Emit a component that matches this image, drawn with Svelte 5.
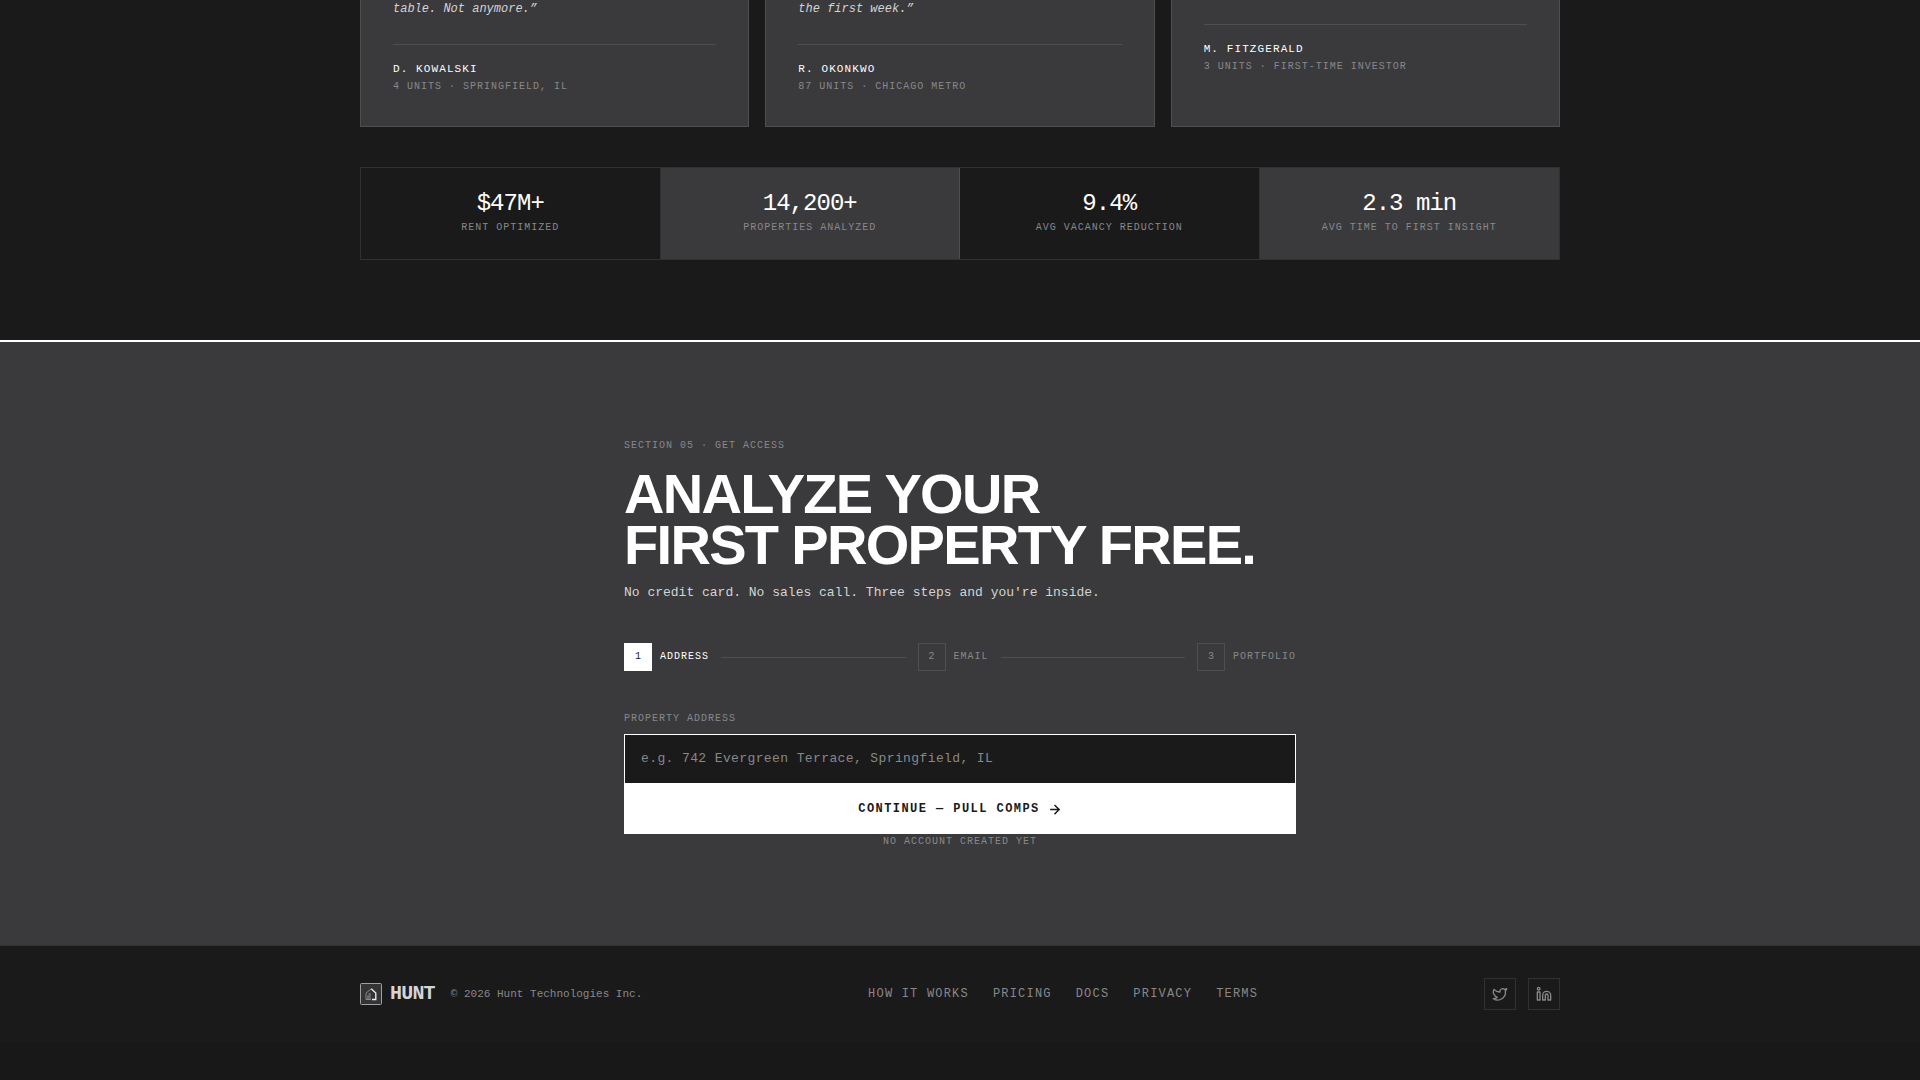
<script>
  const testimonials = [
    { quote: 'table. Not anymore.”', name: 'D. KOWALSKI', detail: '4 UNITS · SPRINGFIELD, IL' },
    { quote: 'the first week.”', name: 'R. OKONKWO', detail: '87 UNITS · CHICAGO METRO' },
    { quote: '', name: 'M. FITZGERALD', detail: '3 UNITS · FIRST-TIME INVESTOR' },
  ];

  const stats = [
    { value: '$47M+', label: 'RENT OPTIMIZED' },
    { value: '14,200+', label: 'PROPERTIES ANALYZED' },
    { value: '9.4%', label: 'AVG VACANCY REDUCTION' },
    { value: '2.3 min', label: 'AVG TIME TO FIRST INSIGHT' },
  ];

  const steps = ['ADDRESS', 'EMAIL', 'PORTFOLIO'];
  const links = ['HOW IT WORKS', 'PRICING', 'DOCS', 'PRIVACY', 'TERMS'];
  let address = $state('');
</script>

<main>
  <section class="proof">
    <div class="cards">
      {#each testimonials as t}
        <figure class="card">
          {#if t.quote}<blockquote>{t.quote}</blockquote>{/if}
          <figcaption>
            <span class="name">{t.name}</span>
            <span class="label">{t.detail}</span>
          </figcaption>
        </figure>
      {/each}
    </div>
    <div class="stats">
      {#each stats as s}
        <div class="stat">
          <strong>{s.value}</strong>
          <span class="label">{s.label}</span>
        </div>
      {/each}
    </div>
  </section>

  <section class="access">
    <div class="inner">
      <p class="label">SECTION 05 · GET ACCESS</p>
      <h2>ANALYZE YOUR<br />FIRST PROPERTY FREE.</h2>
      <p class="lead">No credit card. No sales call. Three steps and you're inside.</p>

      <ol class="steps">
        {#each steps as step, i}
          {#if i > 0}<li class="line" aria-hidden="true"></li>{/if}
          <li class="step" class:active={i === 0}>
            <span class="num">{i + 1}</span>
            <span class="label">{step}</span>
          </li>
        {/each}
      </ol>

      <form onsubmit={(e) => e.preventDefault()}>
        <label class="label" for="address">PROPERTY ADDRESS</label>
        <input id="address" type="text" bind:value={address} placeholder="e.g. 742 Evergreen Terrace, Springfield, IL" />
        <button type="submit">
          CONTINUE — PULL COMPS
          <svg width="14" height="14" viewBox="0 0 24 24" fill="none" stroke="currentColor" stroke-width="2.5" stroke-linecap="square" aria-hidden="true">
            <path d="M5 13h14M12 6l7 7-7 7" />
          </svg>
        </button>
        <p class="label note">NO ACCOUNT CREATED YET</p>
      </form>
    </div>
  </section>

  <footer>
    <div class="bar">
      <div class="brand">
        <svg width="22" height="22" viewBox="0 0 22 22" fill="none" aria-hidden="true">
          <rect x="0.5" y="0.5" width="21" height="21" rx="1" fill="#343436" stroke="#a0a0a0" />
          <path d="M11.2 5.8L6 10.2V16.5H11" stroke="#8a8a8a" />
          <path d="M11.2 5.8L15.8 10V16.5H12" stroke="#f0f0f0" stroke-width="1.3" />
          <path d="M7 16V12.5H8.5V10H10.8V16Z" fill="#6a6a6c" />
        </svg>
        <span class="word">HUNT</span>
        <small>© 2026 Hunt Technologies Inc.</small>
      </div>
      <nav>
        {#each links as link}<a href="#top">{link}</a>{/each}
      </nav>
      <div class="social">
        <a href="#twitter" aria-label="Twitter">
          <svg width="16" height="16" viewBox="0 0 24 24" fill="none" stroke="currentColor" stroke-width="2" stroke-linecap="round" stroke-linejoin="round">
            <path d="M22 4s-.7 2.1-2 3.4c1.6 10-9.4 17.3-18 11.6 2.2.1 4.4-.6 6-2C3 15.5.5 9.6 3 5c2.2 2.6 5.6 4.1 9 4-.9-4.2 4-6.6 7-3.8 1.1 0 3-1.2 3-1.2z" />
          </svg>
        </a>
        <a href="#linkedin" aria-label="LinkedIn">
          <svg width="16" height="16" viewBox="0 0 24 24" fill="none" stroke="currentColor" stroke-width="2" stroke-linecap="round" stroke-linejoin="round">
            <path d="M16 8a6 6 0 0 1 6 6v7h-4v-7a2 2 0 0 0-4 0v7h-4v-7a6 6 0 0 1 6-6z" />
            <rect width="4" height="12" x="2" y="9" />
            <circle cx="4" cy="4" r="2" />
          </svg>
        </a>
      </div>
    </div>
  </footer>
</main>

<style>
  :global(body) {
    margin: 0;
    background: #181818;
  }
  main {
    font-family: 'Liberation Mono', monospace;
    color: #fff;
  }
  p, h2, ol, figure, blockquote {
    margin: 0;
    padding: 0;
  }
  .label {
    display: block;
    font-size: 10px;
    line-height: 16px;
    letter-spacing: 0.1em;
    color: #88888a;
  }
  .proof {
    background: #1a1a1a;
    padding: 0 24px 80px;
  }
  .cards, .stats, .bar {
    max-width: 1200px;
    margin: 0 auto;
  }
  .cards {
    display: grid;
    grid-template-columns: repeat(3, 1fr);
    gap: 16px;
  }
  .card {
    box-sizing: border-box;
    padding: 0 32px 31px;
    background: #3a3a3c;
    border: 1px solid rgba(255, 255, 255, 0.1);
    border-top: 0;
  }
  blockquote {
    padding-bottom: 2px;
    font-size: 12px;
    line-height: 18px;
    font-style: italic;
    color: #d4d4d4;
  }
  figcaption {
    margin-top: 24px;
    padding-top: 16px;
    border-top: 1px solid rgba(255, 255, 255, 0.1);
  }
  .name {
    display: block;
    margin-bottom: 2px;
    font-size: 11px;
    line-height: 16px;
    letter-spacing: 0.1em;
  }
  .stats {
    box-sizing: border-box;
    margin-top: 40px;
    display: grid;
    grid-template-columns: repeat(4, 1fr);
    border: 1px solid rgba(255, 255, 255, 0.1);
  }
  .stat {
    padding: 20px 16px 23px;
    text-align: center;
    border-right: 1px solid rgba(255, 255, 255, 0.1);
  }
  .stat:nth-child(even) {
    background: #3a3a3c;
  }
  .stat:last-child {
    border-right: 0;
  }
  .stat strong {
    display: block;
    font-size: 24px;
    line-height: 32px;
    font-weight: 400;
    letter-spacing: -0.04em;
  }
  .access {
    background: #3a3a3c;
    border-top: 2px solid #fff;
    padding: 96px 24px;
  }
  .inner {
    max-width: 672px;
    margin: 0 auto;
  }
  h2 {
    margin-top: 14px;
    font-family: 'Liberation Sans', sans-serif;
    font-size: 56px;
    line-height: 51px;
    font-weight: 700;
    letter-spacing: -0.03em;
  }
  .lead {
    margin-top: 12px;
    font-size: 13px;
    line-height: 21px;
    color: #d4d4d4;
  }
  .steps {
    display: flex;
    align-items: center;
    gap: 12px;
    margin: 40px 0;
    list-style: none;
  }
  .step {
    display: flex;
    align-items: center;
    gap: 8px;
  }
  .line {
    flex: 1;
    height: 1px;
    background: rgba(255, 255, 255, 0.1);
  }
  .num {
    box-sizing: border-box;
    width: 28px;
    height: 28px;
    border: 1px solid rgba(255, 255, 255, 0.1);
    font-size: 10px;
    line-height: 26px;
    text-align: center;
    color: #88888a;
  }
  .active .num {
    background: #fff;
    border-color: #fff;
    color: #1a1a1a;
  }
  .active .label {
    color: #fff;
  }
  input {
    display: block;
    box-sizing: border-box;
    width: 100%;
    height: 49px;
    margin-top: 7px;
    padding: 0 16px 2px;
    font: 13px 'Liberation Mono', monospace;
    letter-spacing: 0.03em;
    color: #fff;
    background: #1a1a1a;
    border: 1px solid #fff;
    border-bottom: 0;
    border-radius: 0;
    outline: 0;
  }
  input::placeholder {
    color: #88888a;
  }
  button {
    display: flex;
    align-items: center;
    justify-content: center;
    gap: 8px;
    width: 100%;
    height: 51px;
    padding: 0;
    border: 0;
    background: #fff;
    color: #1a1a1a;
    font: 700 12px 'Liberation Mono', monospace;
    letter-spacing: 0.12em;
  }
  .note {
    line-height: 15px;
    text-align: center;
  }
  footer {
    background: #1a1a1a;
    border-top: 1px solid rgba(255, 255, 255, 0.1);
    padding: 32px 24px;
  }
  .bar {
    display: flex;
    align-items: center;
    justify-content: space-between;
  }
  .brand, nav, .social {
    display: flex;
    align-items: center;
  }
  .word {
    margin-left: 8px;
    font-size: 20px;
    line-height: 24px;
    font-weight: 700;
    letter-spacing: -0.04em;
    color: #d4d4d8;
  }
  small {
    margin-left: 16px;
    font-size: 11px;
    line-height: 16px;
    color: #88888a;
  }
  nav {
    gap: 24px;
  }
  nav a {
    font-size: 12px;
    line-height: 16px;
    letter-spacing: 0.1em;
    color: #88888a;
    text-decoration: none;
  }
  .social {
    gap: 12px;
  }
  .social a {
    box-sizing: border-box;
    width: 32px;
    height: 32px;
    display: grid;
    place-items: center;
    border: 1px solid rgba(255, 255, 255, 0.1);
    color: #88888a;
  }
</style>
